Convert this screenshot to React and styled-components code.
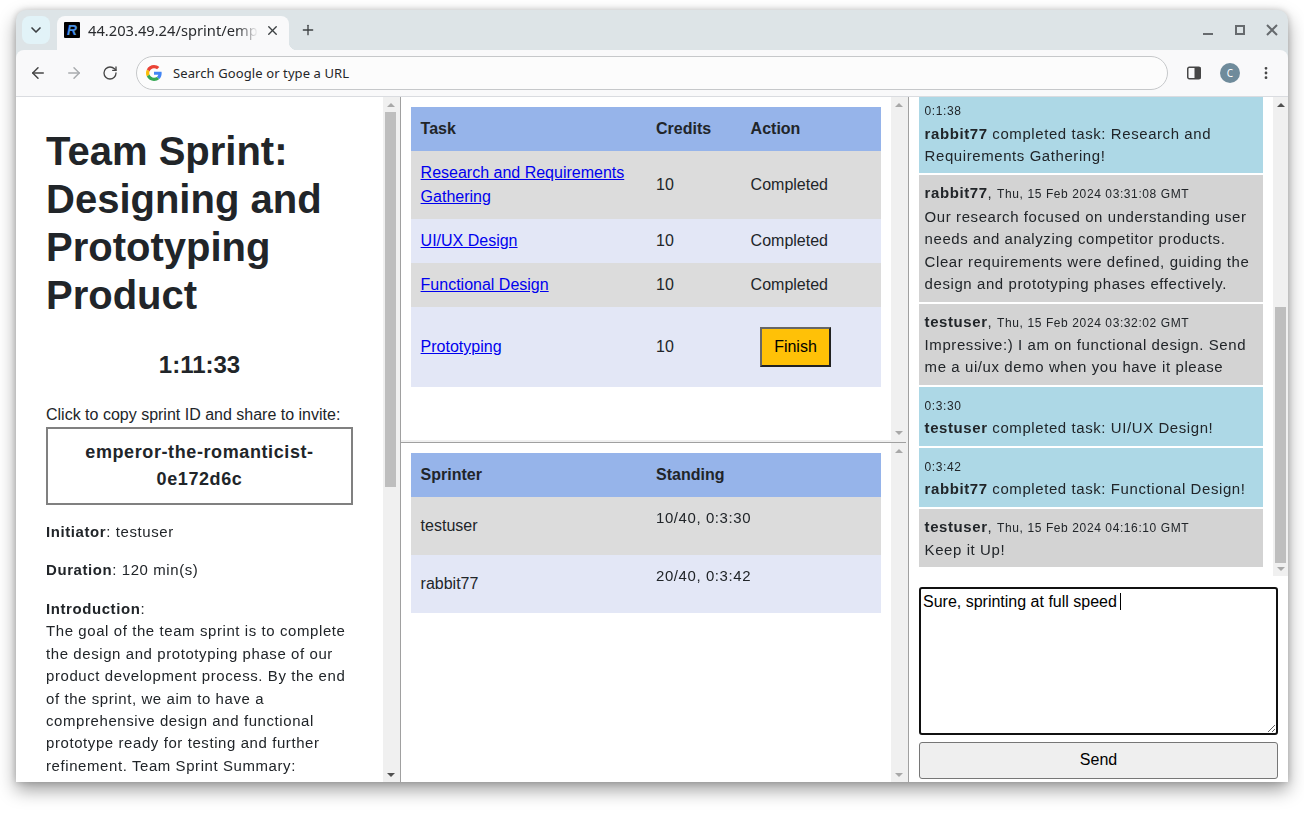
import React, { useEffect, useRef } from 'react';
import styled, { createGlobalStyle } from 'styled-components';
import { ChevronDown, X, Plus, ArrowLeft, ArrowRight, RotateCw, EllipsisVertical } from 'lucide-react';

const GlobalStyle = createGlobalStyle`
  html, body {
    margin: 0;
    padding: 0;
    background: #fff;
    overflow: hidden;
  }
  * {
    box-sizing: border-box;
  }
  body {
    font-family: "Liberation Sans", Arial, sans-serif;
    color: #212529;
  }
`;

const Page = styled.div`
  width: 1304px;
  height: 814px;
  padding: 10px 16px 32px;
`;

const Window = styled.div`
  width: 1272px;
  height: 772px;
  display: flex;
  flex-direction: column;
  background: #dde4e7;
  border-radius: 10px 10px 0 0;
  box-shadow: 0 8px 18px rgba(0, 0, 0, 0.38), 0 0 6px rgba(0, 0, 0, 0.18);
  overflow: hidden;
`;

const TabStrip = styled.div`
  height: 40px;
  flex: none;
  display: flex;
  align-items: flex-end;
  padding-left: 6px;
  color: #3c4043;
`;

const TabSearch = styled.div`
  width: 28px;
  height: 28px;
  margin-bottom: 6px;
  border-radius: 8px;
  background: #e2f3f8;
  display: flex;
  align-items: center;
  justify-content: center;
`;

const Tab = styled.div`
  position: relative;
  width: 232px;
  height: 34px;
  margin-left: 7px;
  padding: 0 9px 6px 7px;
  display: flex;
  align-items: center;
  background: #f9f9fa;
  border-radius: 8px 8px 0 0;
  &::after {
    content: '';
    position: absolute;
    right: -8px;
    bottom: 0;
    width: 8px;
    height: 8px;
    background: radial-gradient(circle at 100% 0, transparent 8px, #f9f9fa 8.5px);
  }
`;

const Favicon = styled.div`
  width: 16px;
  height: 16px;
  flex: none;
  background: #000;
  border-radius: 1px;
  color: #4a90e2;
  font: italic bold 14px/16px "Liberation Sans", sans-serif;
  text-align: center;
`;

const TabTitle = styled.div`
  flex: 1;
  min-width: 0;
  margin-left: 8px;
  font: 14.7px/20px "Noto Sans", sans-serif;
  color: #2a2c2f;
  white-space: nowrap;
  overflow: hidden;
  mask-image: linear-gradient(90deg, #000 84%, transparent 96%);
`;

const NewTab = styled.div`
  width: 28px;
  height: 28px;
  margin: 0 0 6px 5px;
  display: flex;
  align-items: center;
  justify-content: center;
`;

const WindowControls = styled.div`
  margin-left: auto;
  height: 40px;
  display: flex;
  align-items: center;
`;

const WindowControl = styled.svg`
  display: block;
  width: 32px;
  height: 32px;
  fill: none;
  stroke: #666a6e;
  stroke-width: 2;
`;

const Toolbar = styled.div`
  height: 47px;
  flex: none;
  display: flex;
  align-items: center;
  padding: 0 4px;
  background: #f9f9fa;
  border-bottom: 1px solid #dadce0;
  border-radius: 8px 8px 0 0;
  color: #474747;
`;

const ToolButton = styled.div`
  width: 36px;
  height: 36px;
  flex: none;
  display: flex;
  align-items: center;
  justify-content: center;
  color: ${p => (p.$off ? '#a9acaf' : '#474747')};
`;

const Omnibox = styled.div`
  flex: 1;
  height: 34px;
  margin: -1px 8px 0 8px;
  padding-left: 9px;
  display: flex;
  align-items: center;
  background: #fcfcfc;
  border: 1px solid #c6c8ca;
  border-radius: 17px;
`;

const OmniText = styled.span`
  margin-left: 11px;
  font: 13px/18px "Noto Sans", sans-serif;
  letter-spacing: 0.1px;
  color: #25272a;
`;

const Avatar = styled.div`
  width: 20px;
  height: 20px;
  border-radius: 50%;
  background: #6f8b9b;
  color: #fff;
  font: 10px/20px "Noto Sans", sans-serif;
  text-align: center;
`;

const Content = styled.div`
  flex: 1;
  min-height: 0;
  display: flex;
  background: #fff;
`;

const ScrollTrack = styled.div`
  width: 15px;
  flex: none;
  display: flex;
  flex-direction: column;
  background: #f0f0f0;
`;

const ScrollButton = styled.div`
  height: 15px;
  flex: none;
  display: flex;
  align-items: center;
  justify-content: center;
  &::before {
    content: '';
    border-left: 4px solid transparent;
    border-right: 4px solid transparent;
    ${p => (p.$down ? 'border-top' : 'border-bottom')}: 4px solid ${p => (p.$off ? '#a8a8a8' : '#505050')};
  }
`;

const ScrollSpace = styled.div`
  flex: 1;
  min-height: 0;
`;

const ScrollThumb = styled.div`
  width: 11px;
  height: ${p => p.$height}px;
  margin: ${p => p.$top}px 2px 0;
  background: #bebebe;
`;

const Scrollbar = ({ top, height, upOff, downOff }) => (
  <ScrollTrack>
    <ScrollButton $off={upOff} />
    <ScrollSpace>{height ? <ScrollThumb $top={top} $height={height} /> : null}</ScrollSpace>
    <ScrollButton $down $off={downOff} />
  </ScrollTrack>
);

const VSplit = styled.div`
  width: 3px;
  flex: none;
  background: #f0f0f0;
  border-right: 1px solid #a0a0a0;
`;

const HSplit = styled.div`
  height: 3px;
  flex: none;
  background: #f0f0f0;
  border-bottom: 1px solid #a0a0a0;
`;

const BriefFrame = styled.div`
  width: 382px;
  flex: none;
  display: flex;
`;

const BriefPane = styled.div`
  flex: 1;
  min-width: 0;
  padding: 30px;
  overflow-y: auto;
  scrollbar-width: none;
`;

const Title = styled.h1`
  margin: 0 0 24px;
  font-size: 40px;
  line-height: 48px;
  font-weight: 700;
`;

const Timer = styled.div`
  height: 44px;
  margin-bottom: 16px;
  text-align: center;
  font-size: 24px;
  line-height: 44px;
  font-weight: 700;
`;

const CopyHint = styled.div`
  font-size: 16px;
  line-height: 24px;
`;

const SprintId = styled.div`
  padding: 10px;
  border: 2px solid #808080;
  text-align: center;
  font-size: 18px;
  line-height: 27px;
  font-weight: 700;
  letter-spacing: 0.6px;
`;

const Para = styled.p`
  margin: 16px 0 0;
  font-size: 14.96px;
  line-height: 1.5;
  letter-spacing: 0.6px;
  opacity: 0.999;
`;

const MiddleColumn = styled.div`
  width: 505px;
  flex: none;
  display: flex;
  flex-direction: column;
`;

const TableFrame = styled.div`
  flex: ${p => (p.$top ? 'none' : 1)};
  height: ${p => (p.$top ? '343px' : 'auto')};
  min-height: 0;
  display: flex;
`;

const TablePane = styled.div`
  flex: 1;
  min-width: 0;
  padding: 10px;
  overflow-y: auto;
  scrollbar-width: none;
`;

const Table = styled.table`
  width: 470px;
  border-collapse: collapse;
  table-layout: fixed;
  font-size: 16px;
  line-height: 24px;
`;

const HeadCell = styled.th`
  height: 44px;
  padding: 10px 10px 10px ${p => (p.$wide ? '10px' : '9.6px')};
  background: #96b4ea;
  text-align: left;
  font-weight: 700;
`;

const Row = styled.tr`
  background: ${p => (p.$alt ? '#e3e7f6' : '#dcdcdc')};
`;

const Cell = styled.td`
  padding: 10px 10px 10px ${p => (p.$wide ? '10px' : '9.6px')};
`;

const TaskLink = styled.a`
  color: #0000ee;
  text-decoration: underline;
`;

const FinishButton = styled.button`
  display: block;
  width: 71px;
  height: 40px;
  margin: 10px 0 10px 9.4px;
  background: #ffc107;
  border: 2px solid;
  border-color: #666 #222 #222 #666;
  color: #000;
  font: 16px "Liberation Sans", sans-serif;
`;

const Standing = styled.p`
  margin: 0 0 15.5px;
  font-size: 14.96px;
  line-height: 1.5;
  letter-spacing: 0.6px;
  opacity: 0.999;
`;

const ChatColumn = styled.div`
  flex: 1;
  min-width: 0;
  display: flex;
  flex-direction: column;
`;

const MessageFrame = styled.div`
  height: 479px;
  flex: none;
  display: flex;
`;

const MessageList = styled.div`
  flex: 1;
  min-width: 0;
  padding: 0 10px 7px;
  overflow-y: auto;
  scrollbar-width: none;
`;

const Message = styled.div`
  margin-bottom: 2px;
  padding: 7px 5px 6px 5.6px;
  background: ${p => (p.$event ? '#add8e6' : '#d3d3d3')};
  font-size: 14.96px;
  line-height: 1.5;
  letter-spacing: 0.6px;
  opacity: 0.999;
`;

const MessageHead = styled.div`
  margin-bottom: 1px;
`;

const Small = styled.span`
  font-size: 12px;
`;

const Composer = styled.div`
  position: relative;
  flex: none;
  margin: 11px 10px 0;
`;

const ChatInput = styled.textarea`
  display: block;
  width: 359px;
  height: 148px;
  padding: 4px 2px 2px;
  background: #fff;
  border: 2px solid #111;
  border-radius: 3px;
  outline: none;
  font: 16px/18px "Liberation Sans", sans-serif;
  color: #000;
  caret-color: transparent;
`;

const Caret = styled.span`
  position: absolute;
  left: 201px;
  top: 6px;
  width: 1px;
  height: 17px;
  background: #000;
`;

const SendButton = styled.button`
  flex: none;
  width: 359px;
  height: 37px;
  margin: 7px 10px 0;
  padding: 0 0 2px;
  background: #efefef;
  border: 1px solid #767676;
  border-radius: 3px;
  color: #000;
  font: 16px "Liberation Sans", sans-serif;
`;

const GoogleLogo = () => (
  <svg width="16" height="16" viewBox="0 0 48 48">
    <path fill="#EA4335" d="M24 9.5c3.54 0 6.71 1.22 9.21 3.6l6.85-6.85C35.9 2.38 30.47 0 24 0 14.62 0 6.51 5.38 2.56 13.22l7.98 6.19C12.43 13.72 17.74 9.5 24 9.5z" />
    <path fill="#4285F4" d="M46.98 24.55c0-1.57-.15-3.09-.38-4.55H24v9.02h12.94c-.58 2.96-2.26 5.48-4.78 7.18l7.73 6c4.51-4.18 7.09-10.36 7.09-17.65z" />
    <path fill="#FBBC05" d="M10.53 28.59c-.48-1.45-.76-2.99-.76-4.59s.27-3.14.76-4.59l-7.98-6.19C.92 16.46 0 20.12 0 24c0 3.88.92 7.54 2.56 10.78l7.97-6.19z" />
    <path fill="#34A853" d="M24 48c6.48 0 11.93-2.13 15.89-5.81l-7.73-6c-2.15 1.45-4.92 2.3-8.16 2.3-6.26 0-11.57-4.22-13.47-9.91l-7.98 6.19C6.51 42.62 14.62 48 24 48z" />
  </svg>
);

const SidePanelIcon = () => (
  <svg width="16" height="16" viewBox="0 0 16 16">
    <rect x="1.75" y="2.25" width="12.5" height="11.5" rx="1.5" fill="none" stroke="#474747" strokeWidth="1.5" />
    <rect x="8.5" y="2.25" width="6" height="11.5" fill="#474747" />
  </svg>
);

const tasks = [
  { name: 'Research and Requirements Gathering', done: true },
  { name: 'UI/UX Design', done: true },
  { name: 'Functional Design', done: true },
  { name: 'Prototyping', done: false },
];

const standings = [
  { name: 'testuser', score: '10/40, 0:3:30' },
  { name: 'rabbit77', score: '20/40, 0:3:42' },
];

const messages = [
  { author: 'rabbit77', date: 'Thu, 15 Feb 2024 02:58:14 GMT', text: 'Hi team, I just started the sprint. Please join with the sprint ID when you are ready to begin.' },
  { author: 'testuser', date: 'Thu, 15 Feb 2024 03:01:47 GMT', text: 'Joined! I will pick up the design tasks first and share what I find along the way.' },
  { author: 'rabbit77', date: 'Thu, 15 Feb 2024 03:04:22 GMT', text: 'Great, I will start with research so we have clear requirements for everyone.' },
  { event: '0:1:38', author: 'rabbit77', text: 'completed task: Research and Requirements Gathering!' },
  { author: 'rabbit77', date: 'Thu, 15 Feb 2024 03:31:08 GMT', text: 'Our research focused on understanding user needs and analyzing competitor products. Clear requirements were defined, guiding the design and prototyping phases effectively.' },
  { author: 'testuser', date: 'Thu, 15 Feb 2024 03:32:02 GMT', text: 'Impressive:) I am on functional design. Send me a ui/ux demo when you have it please' },
  { event: '0:3:30', author: 'testuser', text: 'completed task: UI/UX Design!' },
  { event: '0:3:42', author: 'rabbit77', text: 'completed task: Functional Design!' },
  { author: 'testuser', date: 'Thu, 15 Feb 2024 04:16:10 GMT', text: 'Keep it Up!' },
];

export default function App() {
  const listRef = useRef(null);

  useEffect(() => {
    listRef.current.scrollTop = listRef.current.scrollHeight;
  }, []);

  return (
    <Page>
      <GlobalStyle />
      <Window>
        <TabStrip>
          <TabSearch><ChevronDown size={16} strokeWidth={2.5} /></TabSearch>
          <Tab>
            <Favicon>R</Favicon>
            <TabTitle>44.203.49.24/sprint/emperor-the-romanticist</TabTitle>
            <X size={15} strokeWidth={2.2} />
          </Tab>
          <NewTab><Plus size={16} strokeWidth={2} /></NewTab>
          <WindowControls>
            <WindowControl viewBox="0 0 32 32"><path d="M11 20h10" /></WindowControl>
            <WindowControl viewBox="0 0 32 32"><rect x="12" y="12" width="8" height="8" /></WindowControl>
            <WindowControl viewBox="0 0 32 32"><path d="M11 11l10 10M21 11L11 21" /></WindowControl>
          </WindowControls>
        </TabStrip>
        <Toolbar>
          <ToolButton><ArrowLeft size={18} strokeWidth={2} /></ToolButton>
          <ToolButton $off><ArrowRight size={18} strokeWidth={2} /></ToolButton>
          <ToolButton><RotateCw size={16} strokeWidth={2} /></ToolButton>
          <Omnibox>
            <GoogleLogo />
            <OmniText>Search Google or type a URL</OmniText>
          </Omnibox>
          <ToolButton><SidePanelIcon /></ToolButton>
          <ToolButton><Avatar>C</Avatar></ToolButton>
          <ToolButton><EllipsisVertical size={16} strokeWidth={2.2} /></ToolButton>
        </Toolbar>
        <Content>
          <BriefFrame>
            <BriefPane>
              <Title>Team Sprint: Designing and Prototyping Product</Title>
              <Timer>1:11:33</Timer>
              <CopyHint>Click to copy sprint ID and share to invite:</CopyHint>
              <SprintId>emperor-the-romanticist-0e172d6c</SprintId>
              <Para><strong>Initiator</strong>: testuser</Para>
              <Para><strong>Duration</strong>: 120 min(s)</Para>
              <Para>
                <strong>Introduction</strong>:<br />
                The goal of the team sprint is to complete the design and prototyping phase of our product development process. By the end of the sprint, we aim to have a comprehensive design and functional prototype ready for testing and further refinement. Team Sprint Summary:<br />
                During this sprint, the team will work through research and requirements gathering, UI/UX design, functional design and prototyping. Each task is worth ten credits, and sprinters are ranked by the credits they earn and the time they take.
              </Para>
            </BriefPane>
            <Scrollbar upOff top={0} height={375} />
          </BriefFrame>
          <VSplit />
          <MiddleColumn>
            <TableFrame $top>
              <TablePane>
                <Table>
                  <colgroup>
                    <col style={{ width: 235 }} />
                    <col style={{ width: 95 }} />
                    <col style={{ width: 140 }} />
                  </colgroup>
                  <thead>
                    <tr>
                      <HeadCell>Task</HeadCell>
                      <HeadCell $wide>Credits</HeadCell>
                      <HeadCell>Action</HeadCell>
                    </tr>
                  </thead>
                  <tbody>
                    {tasks.map((task, i) => (
                      <Row key={task.name} $alt={i % 2 === 1}>
                        <Cell><TaskLink href="#">{task.name}</TaskLink></Cell>
                        <Cell $wide>10</Cell>
                        <Cell>{task.done ? 'Completed' : <FinishButton>Finish</FinishButton>}</Cell>
                      </Row>
                    ))}
                  </tbody>
                </Table>
              </TablePane>
              <Scrollbar upOff downOff />
            </TableFrame>
            <HSplit />
            <TableFrame>
              <TablePane>
                <Table>
                  <colgroup>
                    <col style={{ width: 235 }} />
                    <col style={{ width: 235 }} />
                  </colgroup>
                  <thead>
                    <tr>
                      <HeadCell>Sprinter</HeadCell>
                      <HeadCell $wide>Standing</HeadCell>
                    </tr>
                  </thead>
                  <tbody>
                    {standings.map((s, i) => (
                      <Row key={s.name} $alt={i % 2 === 1}>
                        <Cell>{s.name}</Cell>
                        <Cell $wide><Standing>{s.score}</Standing></Cell>
                      </Row>
                    ))}
                  </tbody>
                </Table>
              </TablePane>
              <Scrollbar upOff downOff />
            </TableFrame>
          </MiddleColumn>
          <VSplit />
          <ChatColumn>
            <MessageFrame>
              <MessageList ref={listRef}>
                {messages.map((m, i) => (
                  <Message key={i} $event={!!m.event}>
                    {m.event ? (
                      <>
                        <MessageHead><Small>{m.event}</Small></MessageHead>
                        <strong>{m.author}</strong> {m.text}
                      </>
                    ) : (
                      <>
                        <MessageHead><strong>{m.author}</strong>, <Small>{m.date}</Small></MessageHead>
                        {m.text}
                      </>
                    )}
                  </Message>
                ))}
              </MessageList>
              <Scrollbar downOff top={195} height={256} />
            </MessageFrame>
            <Composer>
              <ChatInput defaultValue="Sure, sprinting at full speed " />
              <Caret />
            </Composer>
            <SendButton>Send</SendButton>
          </ChatColumn>
        </Content>
      </Window>
    </Page>
  );
}
